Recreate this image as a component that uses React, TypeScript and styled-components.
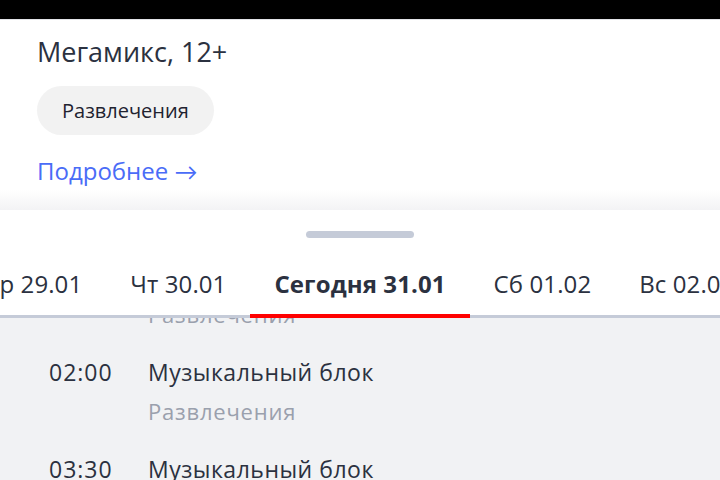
import React from "react";
import styled, { createGlobalStyle } from "styled-components";

const Global = createGlobalStyle`
  html, body { margin: 0; padding: 0; }
  body {
    width: 720px;
    height: 480px;
    overflow: hidden;
    background: #ffffff;
    font-family: "Open Sans", "Noto Sans", sans-serif;
    color: #2b3140;
  }
`;

const Screen = styled.div`
  display: flex;
  flex-direction: column;
  width: 720px;
  height: 480px;
  overflow: hidden;
`;

const StatusBar = styled.div`
  height: 19px;
  flex: none;
  background: #000;
  border-bottom: 1px solid #e2e4e8;
`;

const Info = styled.section`
  display: flex;
  flex-direction: column;
  align-items: flex-start;
  padding: 15px 37px 0;
  height: 170px;
  box-sizing: border-box;
  flex: none;
`;

const Title = styled.h1`
  margin: 0;
  font-size: 27px;
  line-height: 34px;
  font-weight: 400;
  color: #2b3140;
`;

const Chip = styled.div`
  margin-top: 17px;
  height: 49px;
  padding: 0 25px;
  display: flex;
  align-items: center;
  border-radius: 25px;
  background: #f2f2f2;
  font-size: 20px;
  color: #1f2330;
`;

const MoreLink = styled.a`
  margin-top: 21px;
  font-size: 24px;
  line-height: 30px;
  color: #4a6cf7;
  text-decoration: none;
`;

const Arrow = styled.span`
  font-family: "Lato", sans-serif;
  font-size: 23px;
`;

const Gap = styled.div`
  height: 20px;
  flex: none;
  background: linear-gradient(#ffffff, #f3f3f5);
`;

const Sheet = styled.div`
  flex: 1;
  display: flex;
  flex-direction: column;
  min-height: 0;
  background: #f1f2f4;
`;

const SheetHead = styled.div`
  background: #fff;
  flex: none;
  display: flex;
  flex-direction: column;
  align-items: center;
  padding-top: 21px;
  position: relative;
  z-index: 1;
`;

const Handle = styled.div`
  width: 108px;
  height: 7px;
  border-radius: 4px;
  background: #c5cbd8;
`;

const Tabs = styled.div`
  margin-top: 32px;
  width: 100%;
  display: flex;
  border-bottom: 3px solid #c5cbd8;
`;

const Side = styled.div<{ $align: "start" | "end" }>`
  flex: 1;
  min-width: 0;
  display: flex;
  justify-content: ${(p) => (p.$align === "end" ? "flex-end" : "flex-start")};
  overflow: hidden;
`;

const Tab = styled.div<{ $active?: boolean }>`
  flex: none;
  padding: 0 24px 17px;
  font-size: 24px;
  line-height: 28px;
  letter-spacing: 0.1px;
  white-space: nowrap;
  font-weight: ${(p) => (p.$active ? 700 : 400)};
  color: #2b3140;
  position: relative;
  &::after {
    content: "";
    display: ${(p) => (p.$active ? "block" : "none")};
    position: absolute;
    left: 0;
    right: 0;
    bottom: -3px;
    height: 4px;
    background: #ff0000;
  }
`;

const List = styled.div`
  flex: 1;
  min-height: 0;
  overflow: hidden;
`;

const ListInner = styled.div`
  margin-top: -57px;
`;

const Row = styled.div`
  display: grid;
  grid-template-columns: 99px 1fr;
  padding-left: 49px;
  height: 97px;
  align-content: start;
`;

const Time = styled.div`
  font-size: 23px;
  line-height: 28px;
  letter-spacing: 1px;
`;

const Texts = styled.div`
  display: flex;
  flex-direction: column;
`;

const ShowTitle = styled.div`
  font-size: 23px;
  line-height: 28px;
  letter-spacing: 0.5px;
  color: #2b3140;
`;

const ShowGenre = styled.div`
  margin-top: 12px;
  font-size: 22px;
  line-height: 26px;
  letter-spacing: 0.8px;
  color: #9aa0ad;
`;

const leftTabs = ["Ср 29.01", "Чт 30.01"];
const rightTabs = ["Сб 01.02", "Вс 02.02"];

const items = [
  { time: "00:30", title: "Музыкальный блок", genre: "Развлечения" },
  { time: "02:00", title: "Музыкальный блок", genre: "Развлечения" },
  { time: "03:30", title: "Музыкальный блок", genre: "Развлечения" },
];

export default function App() {
  return (
    <>
      <Global />
      <Screen>
        <StatusBar />
        <Info>
          <Title>Мегамикс, 12+</Title>
          <Chip>Развлечения</Chip>
          <MoreLink href="#">
            Подробнее <Arrow>→</Arrow>
          </MoreLink>
        </Info>
        <Gap />
        <Sheet>
          <SheetHead>
            <Handle />
            <Tabs>
              <Side $align="end">
                {leftTabs.map((t) => (
                  <Tab key={t}>{t}</Tab>
                ))}
              </Side>
              <Tab $active>Сегодня 31.01</Tab>
              <Side $align="start">
                {rightTabs.map((t) => (
                  <Tab key={t}>{t}</Tab>
                ))}
              </Side>
            </Tabs>
          </SheetHead>
          <List>
            <ListInner>
              {items.map((it, i) => (
                <Row key={i}>
                  <Time>{it.time}</Time>
                  <Texts>
                    <ShowTitle>{it.title}</ShowTitle>
                    <ShowGenre>{it.genre}</ShowGenre>
                  </Texts>
                </Row>
              ))}
            </ListInner>
          </List>
        </Sheet>
      </Screen>
    </>
  );
}
